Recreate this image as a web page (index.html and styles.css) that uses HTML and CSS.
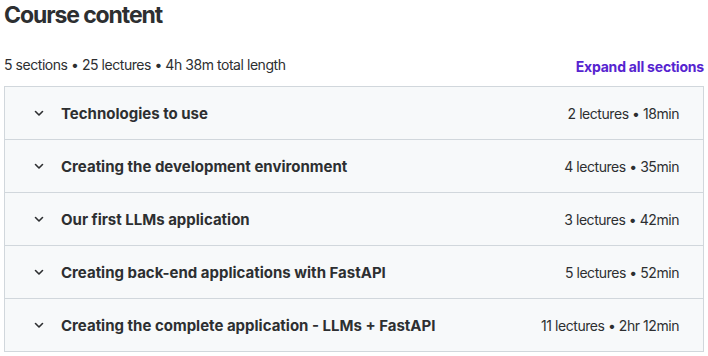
FILE: index.html
```html
<!DOCTYPE html>
<html>
<head>
<meta charset="utf-8">
<link rel="stylesheet" href="styles.css">
</head>
<body>
<div class="wrap">
  <h2 class="title">Course content</h2>
  <div class="meta">
    <span class="stats">5 sections • 25 lectures • 4h 38m total length</span>
    <span class="expand">Expand all sections</span>
  </div>
  <div class="sections">
    <div class="row">
      <svg class="chev" viewBox="0 0 16 16"><path d="M4.5 6.5 L8 10 L11.5 6.5" fill="none" stroke="#2d2f31" stroke-width="1.6" stroke-linecap="round" stroke-linejoin="round"/></svg>
      <span class="name">Technologies to use</span>
      <span class="info">2 lectures • 18min</span>
    </div>
    <div class="row">
      <svg class="chev" viewBox="0 0 16 16"><path d="M4.5 6.5 L8 10 L11.5 6.5" fill="none" stroke="#2d2f31" stroke-width="1.6" stroke-linecap="round" stroke-linejoin="round"/></svg>
      <span class="name">Creating the development environment</span>
      <span class="info">4 lectures • 35min</span>
    </div>
    <div class="row">
      <svg class="chev" viewBox="0 0 16 16"><path d="M4.5 6.5 L8 10 L11.5 6.5" fill="none" stroke="#2d2f31" stroke-width="1.6" stroke-linecap="round" stroke-linejoin="round"/></svg>
      <span class="name">Our first LLMs application</span>
      <span class="info">3 lectures • 42min</span>
    </div>
    <div class="row">
      <svg class="chev" viewBox="0 0 16 16"><path d="M4.5 6.5 L8 10 L11.5 6.5" fill="none" stroke="#2d2f31" stroke-width="1.6" stroke-linecap="round" stroke-linejoin="round"/></svg>
      <span class="name">Creating back-end applications with FastAPI</span>
      <span class="info">5 lectures • 52min</span>
    </div>
    <div class="row">
      <svg class="chev" viewBox="0 0 16 16"><path d="M4.5 6.5 L8 10 L11.5 6.5" fill="none" stroke="#2d2f31" stroke-width="1.6" stroke-linecap="round" stroke-linejoin="round"/></svg>
      <span class="name">Creating the complete application - LLMs + FastAPI</span>
      <span class="info">11 lectures • 2hr 12min</span>
    </div>
  </div>
</div>
</body>
</html>
```
FILE: styles.css
```css
html, body {
  margin: 0;
  padding: 0;
  background: #ffffff;
}
body {
  font-family: "Inter", "Noto Sans", sans-serif;
  color: #2d2f31;
}
.wrap {
  padding: 0 4px;
}
.title {
  margin: 0;
  font-size: 23px;
  line-height: 30px;
  font-weight: 700;
  letter-spacing: -1.1px;
}
.meta {
  display: flex;
  justify-content: space-between;
  align-items: flex-end;
  margin-top: 25px;
  margin-bottom: 11px;
  height: 20px;
}
.stats {
  font-size: 14px;
  line-height: 20px;
  letter-spacing: -0.45px;
}
.expand {
  font-size: 14px;
  line-height: 20px;
  font-weight: 700;
  color: #5624d0;
  margin-bottom: -2px;
  letter-spacing: -0.2px;
}
.sections {
  border: 1px solid #d1d7dc;
  background: #f7f9fa;
}
.row {
  display: flex;
  align-items: center;
  height: 52px;
  padding: 0 24px 0 26px;
  border-top: 1px solid #d1d7dc;
}
.row:first-child {
  border-top: none;
}
.chev {
  width: 16px;
  height: 16px;
  flex: none;
  margin-right: 14px;
}
.name {
  flex: 1;
  font-size: 15px;
  font-weight: 700;
}
.info {
  font-size: 14px;
  letter-spacing: -0.45px;
}
```
